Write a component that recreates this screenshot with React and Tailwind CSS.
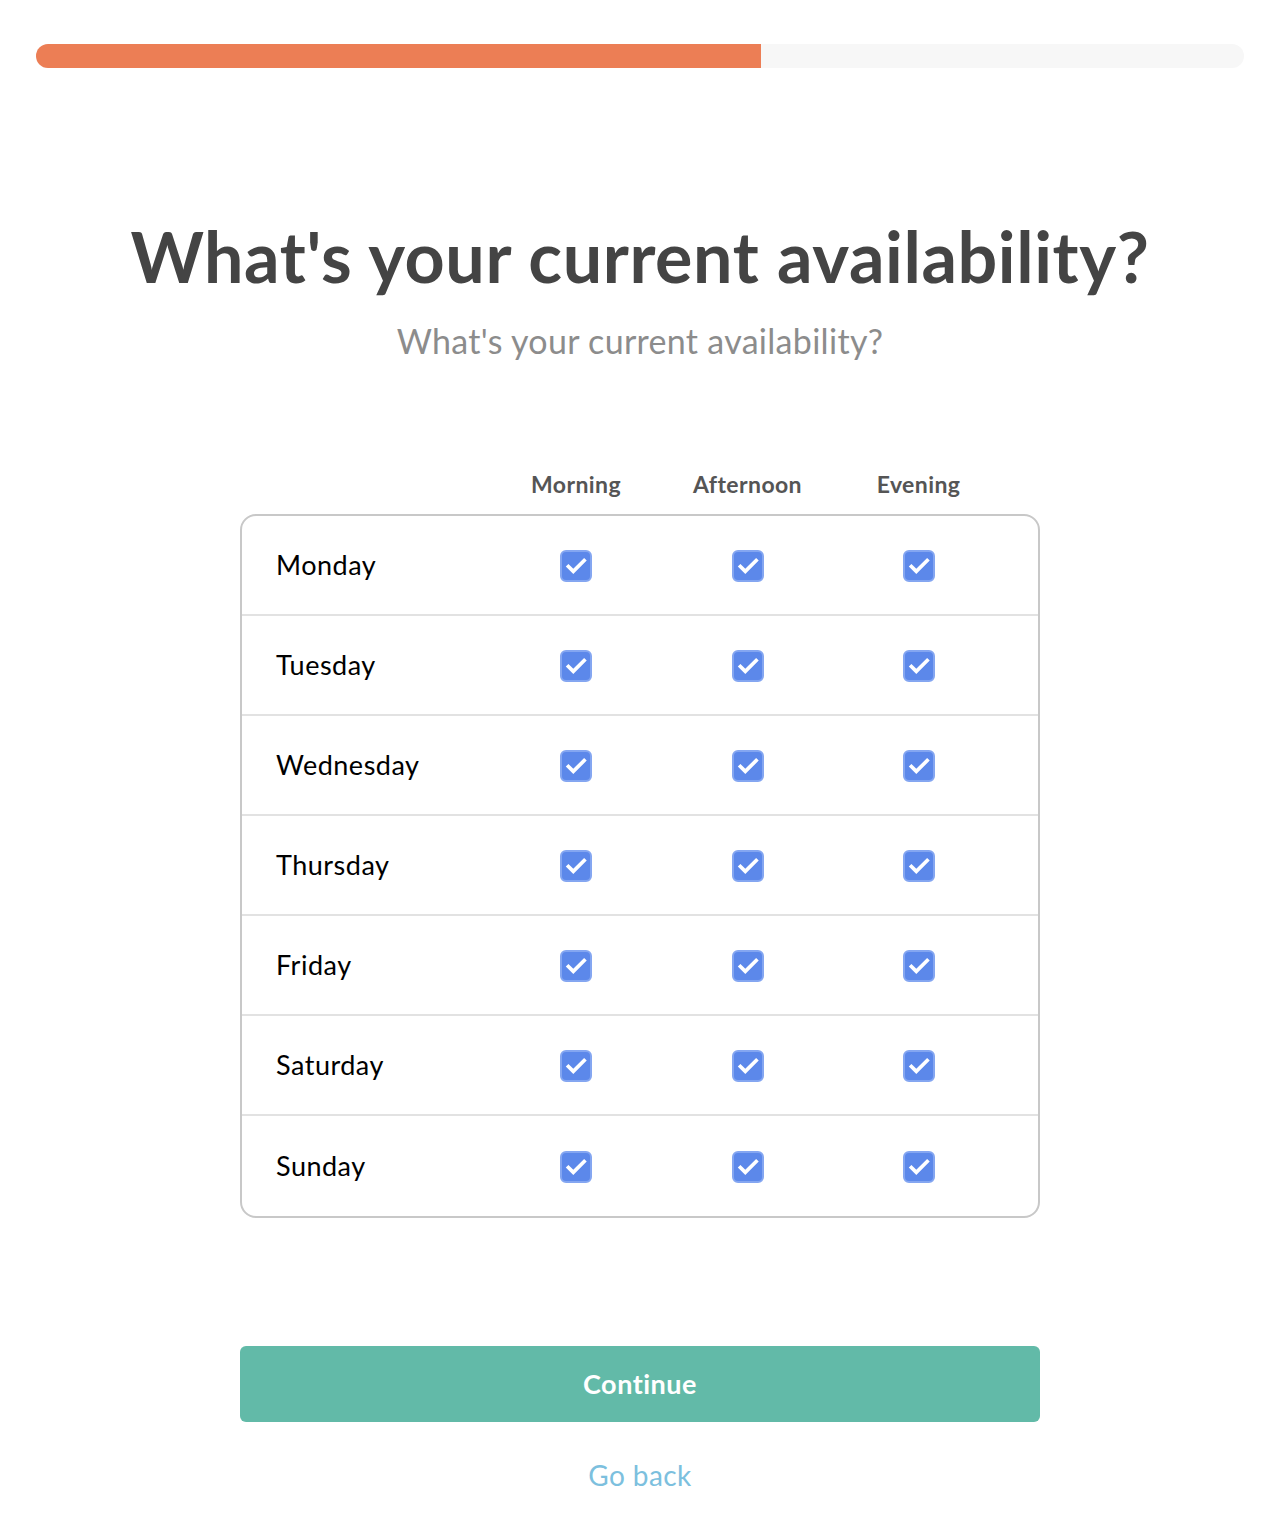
import React from 'react';

const days = ['Monday', 'Tuesday', 'Wednesday', 'Thursday', 'Friday', 'Saturday', 'Sunday'];
const slots = ['Morning', 'Afternoon', 'Evening'];

const Check = () => (
  <div className="flex h-[32px] w-[32px] items-center justify-center rounded-[6px] border-2 border-[#84a6f1] bg-[#5c88ea]">
    <svg viewBox="0 0 24 24" className="h-[26px] w-[26px]" fill="none">
      <path d="M5 12.5l4.5 4.5L19.5 7" stroke="white" strokeWidth="3.4" strokeLinecap="square" />
    </svg>
  </div>
);

const App = () => {
  return (
    <div className="min-h-[1526px] w-[1280px] bg-white font-['Lato',sans-serif]">
      {/* Progress */}
      <div className="px-[36px] pt-[44px]">
        <div className="h-[24px] w-full overflow-hidden rounded-full bg-[#f7f7f7]">
          <div className="h-full w-[60%] bg-[#ec7e55]" />
        </div>
      </div>

      <h1 className="mt-[146px] text-center text-[70px] font-bold leading-[84px] tracking-[0.6px] text-[#444444]">
        What's your current availability?
      </h1>
      <p className="mt-[23px] text-center text-[34px] font-normal leading-[40px] tracking-[0.3px] text-[#8c8c8c]">
        What's your current availability?
      </p>

      <div className="mx-auto mt-[110px] w-[800px]">
        {/* Column headers */}
        <div className="grid grid-cols-[250px_172px_171px_171px_1fr] pb-[17px]">
          <div />
          {slots.map((s) => (
            <div key={s} className="text-center text-[23px] font-bold leading-[26px] tracking-[0.4px] text-[#555555]">
              {s}
            </div>
          ))}
        </div>

        <div className="overflow-hidden rounded-[16px] border-2 border-[#c8c8c8]">
          {days.map((d, i) => (
            <div
              key={d}
              className={`grid h-[100px] grid-cols-[248px_172px_171px_171px_1fr] items-center ${
                i < days.length - 1 ? 'border-b-2 border-[#e2e2e2]' : ''
              }`}
            >
              <div className="pl-[34px] text-[27px] leading-[30px] tracking-[0.5px] text-black">{d}</div>
              {slots.map((s) => (
                <div key={s} className="flex justify-center pt-[2px]">
                  <Check />
                </div>
              ))}
              <div />
            </div>
          ))}
        </div>

        <button className="mt-[128px] flex h-[76px] w-full items-center justify-center rounded-[6px] bg-[#62baa8] text-[27px] font-bold tracking-[0.5px] text-white">
          Continue
        </button>
        <div className="mt-[37px] text-center text-[28px] leading-[32px] tracking-[0.4px] text-[#7cc0de]">Go back</div>
      </div>
    </div>
  );
};

export default App;
